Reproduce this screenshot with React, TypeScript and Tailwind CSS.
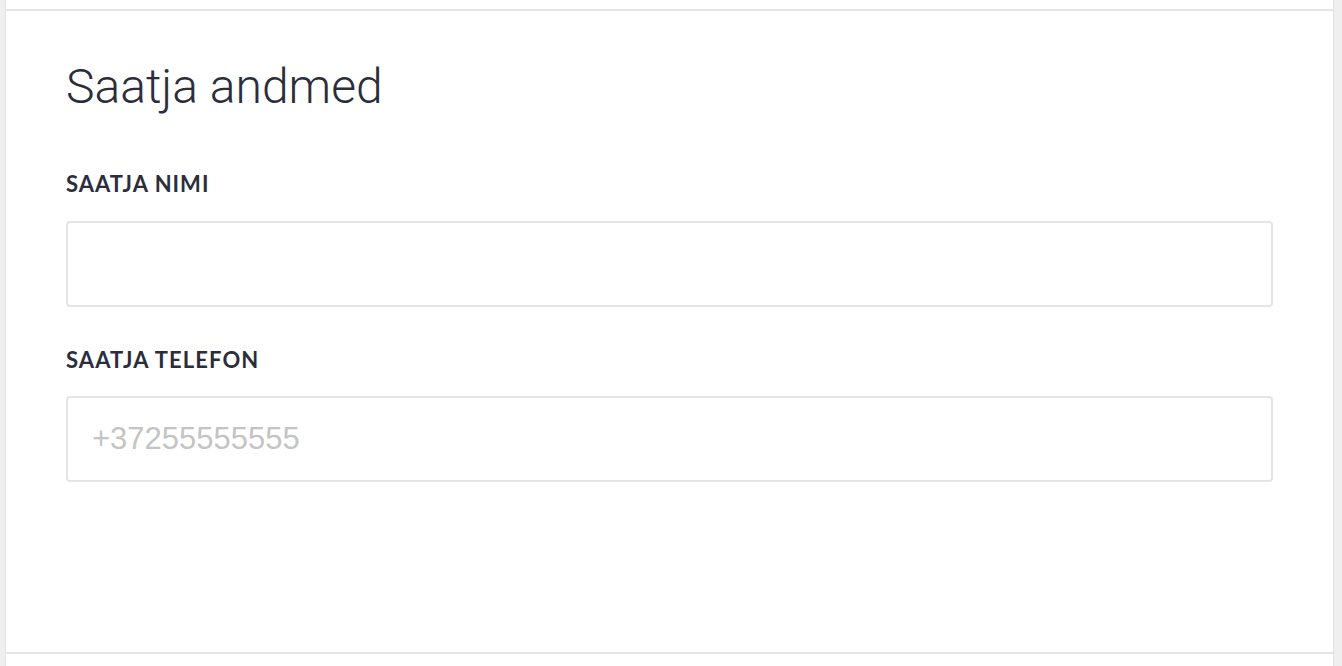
export default function App() {
  return (
    <div className="min-h-screen bg-[#efefef] pl-[5px] pr-[8px]">
      <div className="min-h-screen border-x border-[#e2e2e2] bg-white">
        <div className="h-[11px] border-b-2 border-[#e4e5e7]" />

        {/* Sender details */}
        <section className="h-[643px] border-b-2 border-[#e4e5e7] px-[60px] pt-[52px]">
          <h2 className="font-['Roboto',sans-serif] text-[48px] font-light leading-none text-[#2b2e3a]">
            Saatja andmed
          </h2>

          <div className="mt-[62px]">
            <label className="block font-['Lato',sans-serif] text-[22px] font-bold leading-none tracking-[1px] text-[#2b2e3a]">
              SAATJA NIMI
            </label>
            <input
              type="text"
              className="mt-[26px] block h-[86px] w-full rounded-[4px] border-2 border-[#e4e5e7] bg-white px-[24px] font-['Liberation_Sans',sans-serif] text-[31px] text-[#2b2e3a] outline-none placeholder:text-[#c4c4c4]"
            />
          </div>

          <div className="mt-[42px]">
            <label className="block font-['Lato',sans-serif] text-[22px] font-bold leading-none tracking-[1.1px] text-[#2b2e3a]">
              SAATJA TELEFON
            </label>
            <input
              type="tel"
              placeholder="+37255555555"
              className="mt-[25px] block h-[86px] w-full rounded-[4px] border-2 border-[#e4e5e7] bg-white px-[24px] font-['Liberation_Sans',sans-serif] text-[31px] text-[#2b2e3a] outline-none placeholder:text-[#c4c4c4]"
            />
          </div>
        </section>
      </div>
    </div>
  );
}
